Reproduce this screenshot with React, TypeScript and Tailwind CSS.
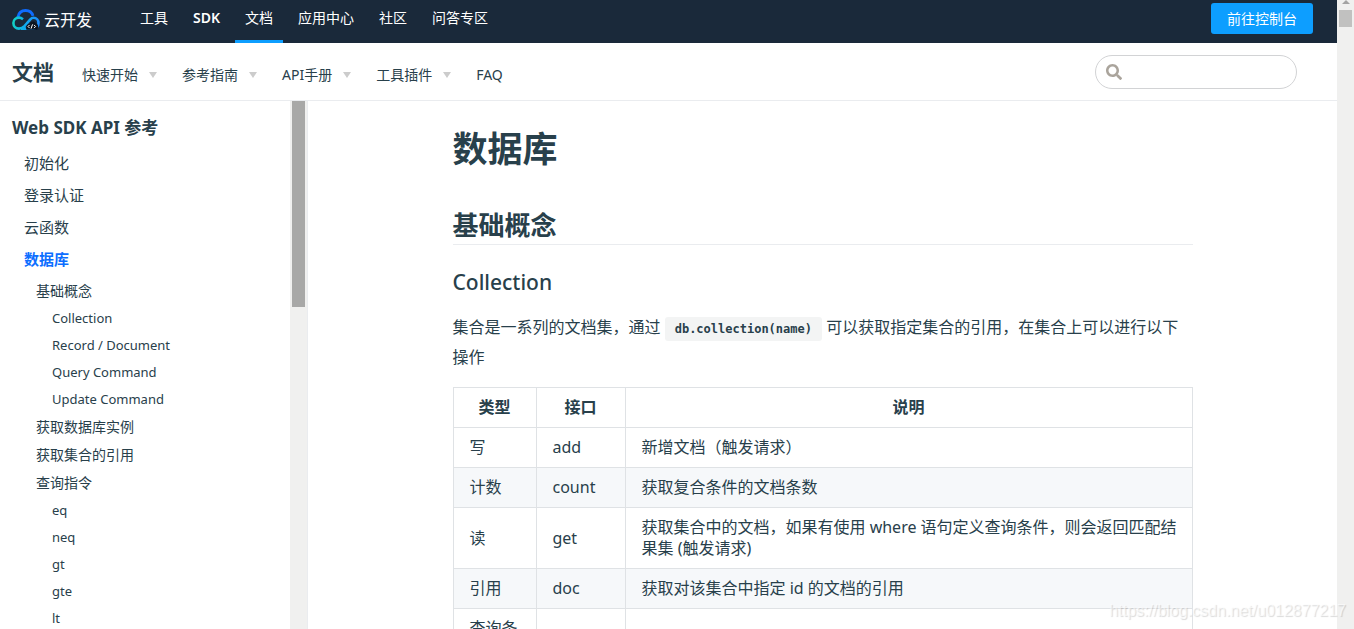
import { FaSearch } from "react-icons/fa";

type SideItem = { label: string; level: 1 | 2 | 3; active?: boolean };

const topNav = [
  { label: "工具" },
  { label: "SDK" },
  { label: "文档", active: true },
  { label: "应用中心" },
  { label: "社区" },
  { label: "问答专区" },
];

const docNav = [
  { label: "快速开始", menu: true },
  { label: "参考指南", menu: true },
  { label: "API手册", menu: true },
  { label: "工具插件", menu: true },
  { label: "FAQ", menu: false },
];

const sideItems: SideItem[] = [
  { label: "初始化", level: 1 },
  { label: "登录认证", level: 1 },
  { label: "云函数", level: 1 },
  { label: "数据库", level: 1, active: true },
  { label: "基础概念", level: 2 },
  { label: "Collection", level: 3 },
  { label: "Record / Document", level: 3 },
  { label: "Query Command", level: 3 },
  { label: "Update Command", level: 3 },
  { label: "获取数据库实例", level: 2 },
  { label: "获取集合的引用", level: 2 },
  { label: "查询指令", level: 2 },
  { label: "eq", level: 3 },
  { label: "neq", level: 3 },
  { label: "gt", level: 3 },
  { label: "gte", level: 3 },
  { label: "lt", level: 3 },
];

const levelClass = {
  1: "pl-6 h-8 text-[15px]",
  2: "pl-9 h-7 text-sm",
  3: "pl-[52px] h-[27px] text-[13px]",
};

const rows = [
  ["写", "add", "新增文档（触发请求）"],
  ["计数", "count", "获取复合条件的文档条数"],
  ["读", "get", "获取集合中的文档，如果有使用 where 语句定义查询条件，则会返回匹配结果集 (触发请求)"],
  ["引用", "doc", "获取对该集合中指定 id 的文档的引用"],
  ["查询条件", "", ""],
];

function Logo() {
  return (
    <svg width="28" height="22" viewBox="0 0 28 22" fill="none" aria-hidden="true">
      <defs>
        <linearGradient id="loop" x1="1" y1="10" x2="27" y2="14" gradientUnits="userSpaceOnUse">
          <stop stopColor="#12d3c3" />
          <stop offset="0.5" stopColor="#10a8f0" />
          <stop offset="1" stopColor="#1e8cff" />
        </linearGradient>
      </defs>
      <path d="M5.800 8.200C6.600 4 9.800 1.500 13.600 1.500c3.600 0 6.400 2 7.400 5.400" stroke="#0f6cff" strokeWidth="2.800" />
      <path
        d="M11 10.200C9.700 9.200 8.400 8.600 7 8.600c-3.100 0-5.600 2.300-5.600 5.400s2.400 5.600 5.600 5.600c2.400 0 4-1 5.700-2.800l5.400-6.200c1-1.100 2.200-1.800 3.400-1.800 3 0 5 2.400 5 5.200 0 3-1.900 5.600-5 5.600H9"
        stroke="url(#loop)"
        strokeWidth="2.600"
      />
      <path
        d="M14.500 20.800c-1.200-3.400.6-6 3.300-6.400 1-2.600 5-2.600 6.200 0 2.600.5 3 4.600.8 6.400z"
        fill="#0c1420"
      />
      <path
        d="M17.600 15.900l-1.600 1.600 1.600 1.600M22 15.900l1.600 1.600-1.600 1.600M20.500 15.400l-1.400 4.200"
        stroke="#fff"
        strokeWidth="1"
      />
    </svg>
  );
}

function TopBar() {
  return (
    <header className="h-[43px] shrink-0 bg-[#1a293a] text-white flex items-start justify-between pl-3 pr-6">
      <div className="flex">
        <a href="#" className="flex items-center gap-1 h-10 w-[118px] text-base">
          <Logo />
          云开发
        </a>
        <nav className="flex gap-[5px] text-sm">
          {topNav.map((item) => (
            <a
              key={item.label}
              href="#"
              className={`h-[43px] px-2.5 pt-2 leading-5 border-b-[3px] ${
                item.active ? "border-[#0d9eff]" : "border-transparent"
              } ${item.label === "SDK" ? "font-semibold" : ""}`}
            >
              {item.label}
            </a>
          ))}
        </nav>
      </div>
      <button type="button" className="mt-[3px] h-[31px] px-4 rounded-[3px] bg-[#0d9eff] text-sm">
        前往控制台
      </button>
    </header>
  );
}

function DocBar() {
  return (
    <div className="h-[58px] shrink-0 border-b border-[#eaecef] flex items-center justify-between pl-3 pr-10">
      <div className="flex items-center">
        <a href="#" className="w-[70px] text-[21px] font-bold leading-8">文档</a>
        <nav className="flex gap-[25px] pt-1.5 text-sm">
          {docNav.map((item) => (
            <a key={item.label} href="#" className="flex items-center gap-[11px]">
              {item.label}
              {item.menu && (
                <span className="border-x-4 border-x-transparent border-t-[6px] border-t-[#ccc]" />
              )}
            </a>
          ))}
        </nav>
      </div>
      <label className="flex items-center w-[202px] h-[34px] pl-2.5 pr-4 gap-2 rounded-full border border-[#d2d3d5]">
        <FaSearch className="size-4 text-[#aaa49c]" />
        <input type="text" aria-label="搜索" className="min-w-0 flex-1 outline-none text-sm" />
      </label>
    </div>
  );
}

function Sidebar() {
  return (
    <aside className="w-[308px] shrink-0 flex border-r border-[#eaecef] overflow-hidden">
      <div className="flex-1 pt-2">
        <h3 className="pl-3 text-[17px] font-bold leading-[38px]">Web SDK API 参考</h3>
        <ul>
          {sideItems.map((item) => (
            <li key={item.label} className={item.active ? "mb-0.5" : ""}>
              <a
                href="#"
                className={`flex items-center ${levelClass[item.level]} ${
                  item.active ? "text-[#0d6eff] font-semibold" : ""
                }`}
              >
                {item.label}
              </a>
            </li>
          ))}
        </ul>
      </div>
      <div className="w-[17px] bg-[#f0f0ef] px-0.5">
        <div className="h-[206px] bg-[#a8a8a7]" />
      </div>
    </aside>
  );
}

function Article() {
  return (
    <main className="flex-1 min-w-0 overflow-hidden">
      <article className="max-w-[740px] mx-auto pt-6">
        <h1 className="text-[35px] leading-[48px] font-bold">数据库</h1>
        <h2 className="mt-[33px] text-[26px] leading-[38px] font-bold border-b border-[#eaecef]">基础概念</h2>
        <h3 className="mt-[23px] text-[21px] leading-7 font-medium">Collection</h3>
        <p className="mt-4 text-base leading-[30px]">
          集合是一系列的文档集，通过{" "}
          <code className="rounded-[3px] bg-[#f3f4f4] px-2.5 py-[5px] font-['DejaVu_Sans_Mono',monospace] text-[12px] leading-none font-bold">
            db.collection(name)
          </code>{" "}
          可以获取指定集合的引用，在集合上可以进行以下操作
        </p>
        <table className="mt-[15px] w-full table-fixed border-collapse text-base leading-[21px]">
          <thead>
            <tr>
              <th className="w-[83px] border border-[#dfe2e5] px-4 py-[9px] font-semibold">类型</th>
              <th className="w-[89px] border border-[#dfe2e5] px-4 py-[9px] font-semibold">接口</th>
              <th className="border border-[#dfe2e5] px-4 py-[9px] font-semibold">说明</th>
            </tr>
          </thead>
          <tbody>
            {rows.map((row) => (
              <tr key={row[0]} className="even:bg-[#f6f8fa]">
                {row.map((cell, i) => (
                  <td key={i} className="border border-[#dfe2e5] pl-4 pr-3 py-[9px]">{cell}</td>
                ))}
              </tr>
            ))}
          </tbody>
        </table>
      </article>
    </main>
  );
}

export default function App() {
  return (
    <div className="relative flex h-screen overflow-hidden bg-white text-[#28404b] font-['Noto_Sans','Noto_Sans_CJK_SC',sans-serif]">
      <div className="flex flex-1 min-w-0 flex-col">
        <TopBar />
        <DocBar />
        <div className="flex flex-1 min-h-0">
          <Sidebar />
          <Article />
        </div>
      </div>
      <div className="w-[17px] shrink-0 bg-[#f0f0ef] flex flex-col items-center">
        <div className="border-x-4 border-x-transparent border-b-4 border-b-[#a3a3a3]" />
        <div className="mt-1.5 h-[17px] w-[13px] bg-[#c1c1c0]" />
      </div>
      <span className="absolute bottom-1.5 right-2 font-['Liberation_Sans',sans-serif] text-base text-white/60 [text-shadow:1px_1px_1px_rgba(0,0,0,0.15)]">
        https://blog.csdn.net/u012877217
      </span>
    </div>
  );
}
